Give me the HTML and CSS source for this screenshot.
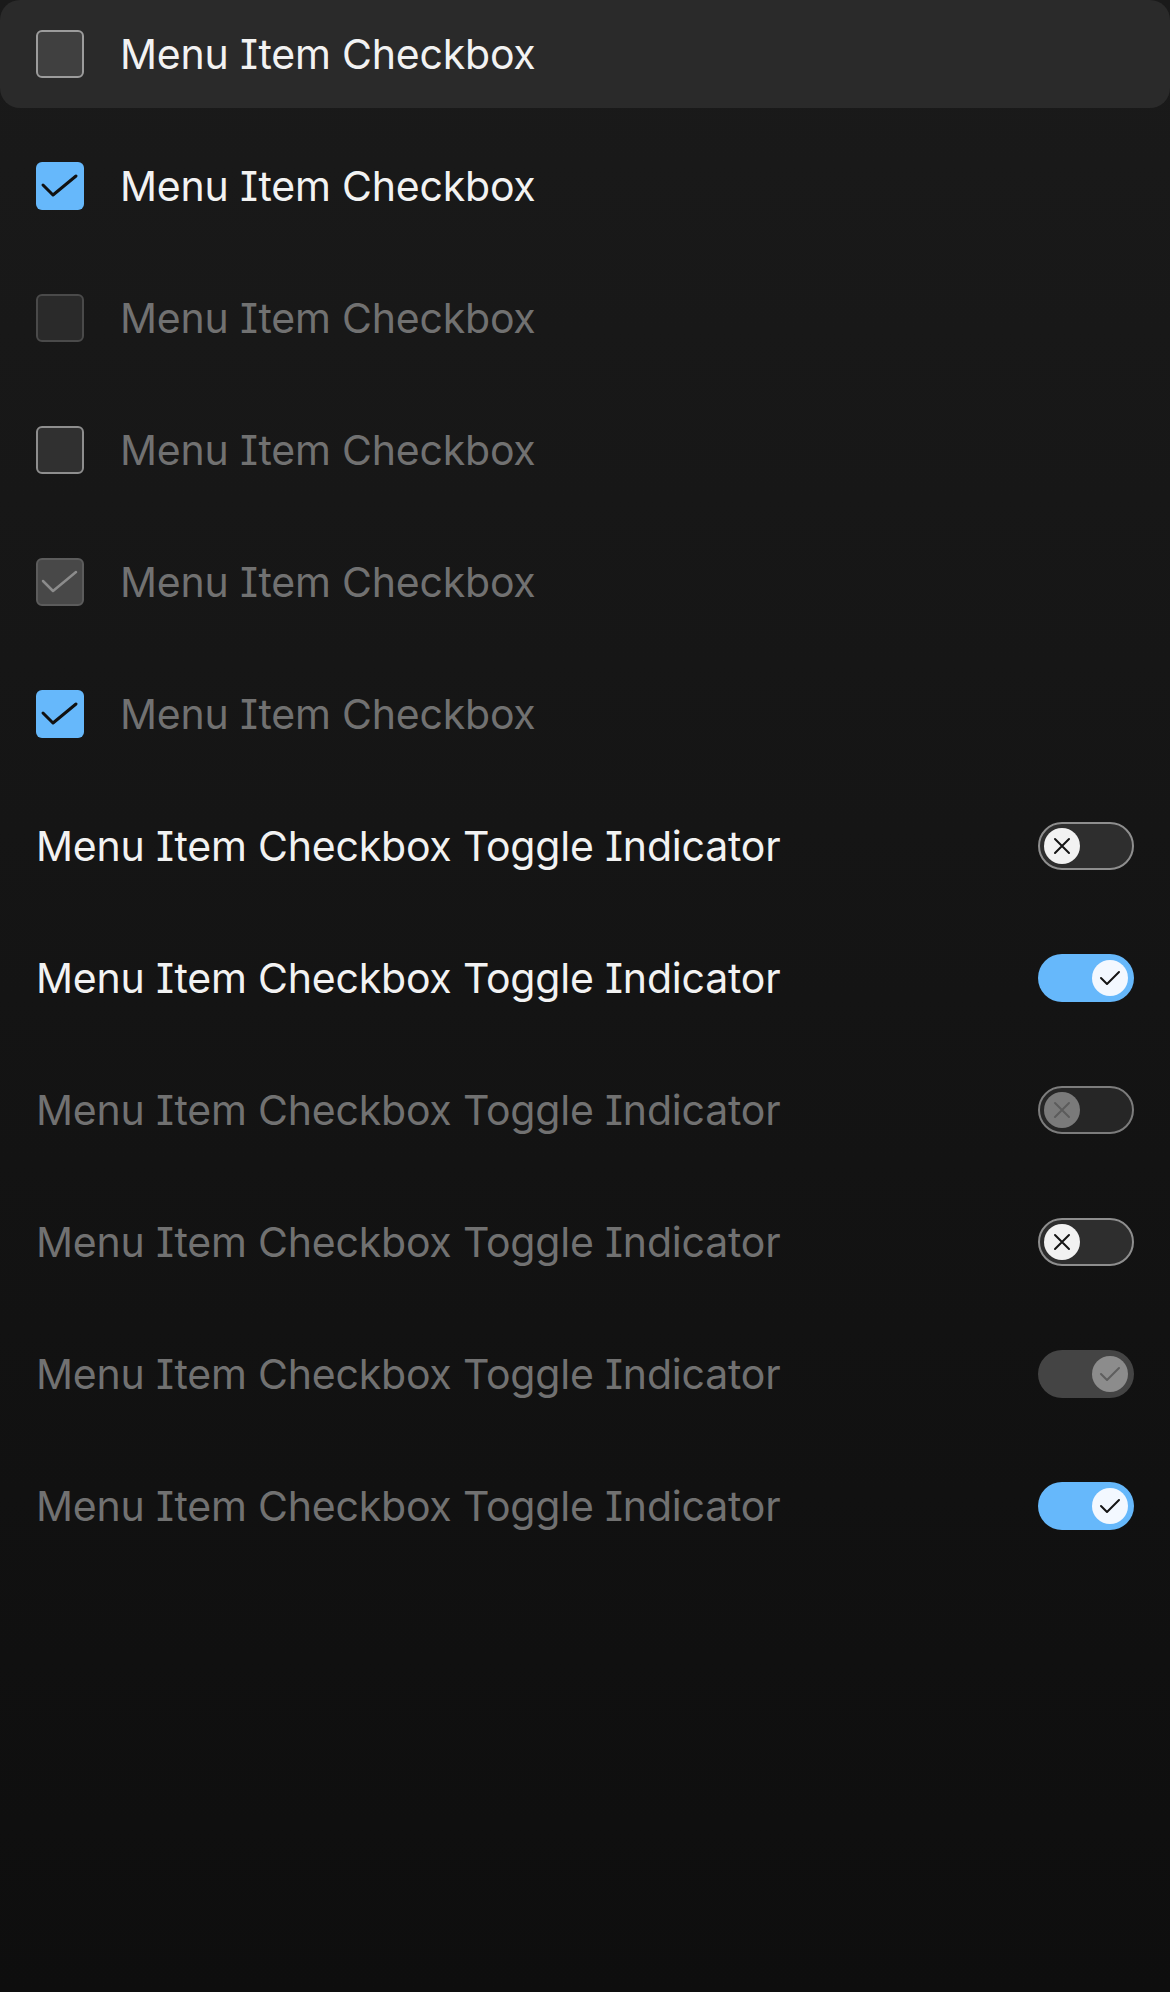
FILE: index.html
```html
<!DOCTYPE html>
<html lang="en">
<head>
<meta charset="utf-8">
<title>Menu Item Checkbox</title>
<link rel="stylesheet" href="styles.css">
</head>
<body>
<div class="menu">
  <div class="item hover">
    <span class="cb cb-hover"></span>
    <span class="label">Menu Item Checkbox</span>
  </div>
  <div class="item">
    <span class="cb cb-checked"><svg viewBox="0 0 48 48"><path d="M7 23 L17 33 L40 14"/></svg></span>
    <span class="label">Menu Item Checkbox</span>
  </div>
  <div class="item">
    <span class="cb cb-disabled"></span>
    <span class="label muted">Menu Item Checkbox</span>
  </div>
  <div class="item">
    <span class="cb cb-readonly"></span>
    <span class="label muted">Menu Item Checkbox</span>
  </div>
  <div class="item">
    <span class="cb cb-disabled-checked"><svg viewBox="0 0 48 48"><path d="M7 23 L17 33 L40 14"/></svg></span>
    <span class="label muted">Menu Item Checkbox</span>
  </div>
  <div class="item">
    <span class="cb cb-checked"><svg viewBox="0 0 48 48"><path d="M7 23 L17 33 L40 14"/></svg></span>
    <span class="label muted">Menu Item Checkbox</span>
  </div>

  <div class="item toggle-row">
    <span class="label">Menu Item Checkbox Toggle Indicator</span>
    <span class="tg tg-off"><span class="knob"><svg viewBox="0 0 36 36"><path d="M11 11 L25 25 M25 11 L11 25"/></svg></span></span>
  </div>
  <div class="item toggle-row">
    <span class="label">Menu Item Checkbox Toggle Indicator</span>
    <span class="tg tg-on"><span class="knob"><svg viewBox="0 0 36 36"><path d="M9 18 L15 24 L27 12"/></svg></span></span>
  </div>
  <div class="item toggle-row">
    <span class="label muted">Menu Item Checkbox Toggle Indicator</span>
    <span class="tg tg-off tg-disabled"><span class="knob"><svg viewBox="0 0 36 36"><path d="M11 11 L25 25 M25 11 L11 25"/></svg></span></span>
  </div>
  <div class="item toggle-row">
    <span class="label muted">Menu Item Checkbox Toggle Indicator</span>
    <span class="tg tg-off"><span class="knob"><svg viewBox="0 0 36 36"><path d="M11 11 L25 25 M25 11 L11 25"/></svg></span></span>
  </div>
  <div class="item toggle-row">
    <span class="label muted">Menu Item Checkbox Toggle Indicator</span>
    <span class="tg tg-on tg-disabled"><span class="knob"><svg viewBox="0 0 36 36"><path d="M9 18 L15 24 L27 12"/></svg></span></span>
  </div>
  <div class="item toggle-row">
    <span class="label muted">Menu Item Checkbox Toggle Indicator</span>
    <span class="tg tg-on"><span class="knob"><svg viewBox="0 0 36 36"><path d="M9 18 L15 24 L27 12"/></svg></span></span>
  </div>
</div>
</body>
</html>
```
FILE: styles.css
```css
html, body {
  margin: 0;
  padding: 0;
}
body {
  width: 1170px;
  min-height: 1992px;
  background: linear-gradient(180deg, #1a1a1a 0%, #141414 50%, #0e0e0e 100%);
  font-family: "Inter", "Noto Sans", sans-serif;
  font-feature-settings: "cv08" 1;
  color: #f2f2f2;
}
.menu {
  display: flex;
  flex-direction: column;
  gap: 24px;
}
.item {
  height: 108px;
  box-sizing: border-box;
  padding: 0 36px;
  display: flex;
  align-items: center;
  gap: 36px;
  border-radius: 20px;
}
.item.hover {
  background: #2a2a2a;
}
.toggle-row {
  justify-content: space-between;
}
.label {
  font-size: 41px;
  letter-spacing: -0.2px;
  line-height: 1;
  color: #f2f2f2;
  white-space: nowrap;
}
.label.muted {
  color: #717171;
}
.cb {
  width: 48px;
  height: 48px;
  box-sizing: border-box;
  border-radius: 6px;
  flex: none;
  display: flex;
}
.cb svg {
  width: 48px;
  height: 48px;
  fill: none;
  stroke-width: 3;
  stroke-linecap: round;
  stroke-linejoin: round;
}
.cb-hover {
  background: #404040;
  border: 2px solid #9c9c9c;
}
.cb-checked {
  background: #66b8fb;
}
.cb-checked svg {
  stroke: #111111;
}
.cb-disabled {
  background: #2a2a2a;
  border: 2px solid #4a4a4a;
}
.cb-readonly {
  background: #303030;
  border: 2px solid #8e8e8e;
}
.cb-disabled-checked {
  background: #484848;
  border: 2px solid #5c5c5c;
}
.cb-disabled-checked svg {
  margin: -2px;
  stroke: #8c8c8c;
  stroke-width: 2.5;
}
.tg {
  width: 96px;
  height: 48px;
  box-sizing: border-box;
  border-radius: 24px;
  flex: none;
  display: flex;
  align-items: center;
  padding: 0 4px;
}
.tg-off {
  background: #2e2e2e;
  border: 2px solid #8e8e8e;
  justify-content: flex-start;
}
.tg-on {
  background: #66b8fb;
  justify-content: flex-end;
  padding: 0 6px;
}
.knob {
  width: 36px;
  height: 36px;
  border-radius: 50%;
  background: #f2f2f2;
  display: flex;
}
.tg-on .knob {
  background: #f3f8ff;
}
.knob svg {
  width: 36px;
  height: 36px;
  fill: none;
  stroke: #151515;
  stroke-width: 2;
  stroke-linecap: round;
  stroke-linejoin: round;
}
.tg-off.tg-disabled {
  background: #262626;
  border-color: #7c7c7c;
}
.tg-off.tg-disabled .knob {
  background: #7a7a7a;
}
.tg-off.tg-disabled .knob svg {
  stroke: #5c5c5c;
}
.tg-on.tg-disabled {
  background: #444444;
}
.tg-on.tg-disabled .knob {
  background: #8c8c8c;
}
.tg-on.tg-disabled .knob svg {
  stroke: #5e5e5e;
}
```
